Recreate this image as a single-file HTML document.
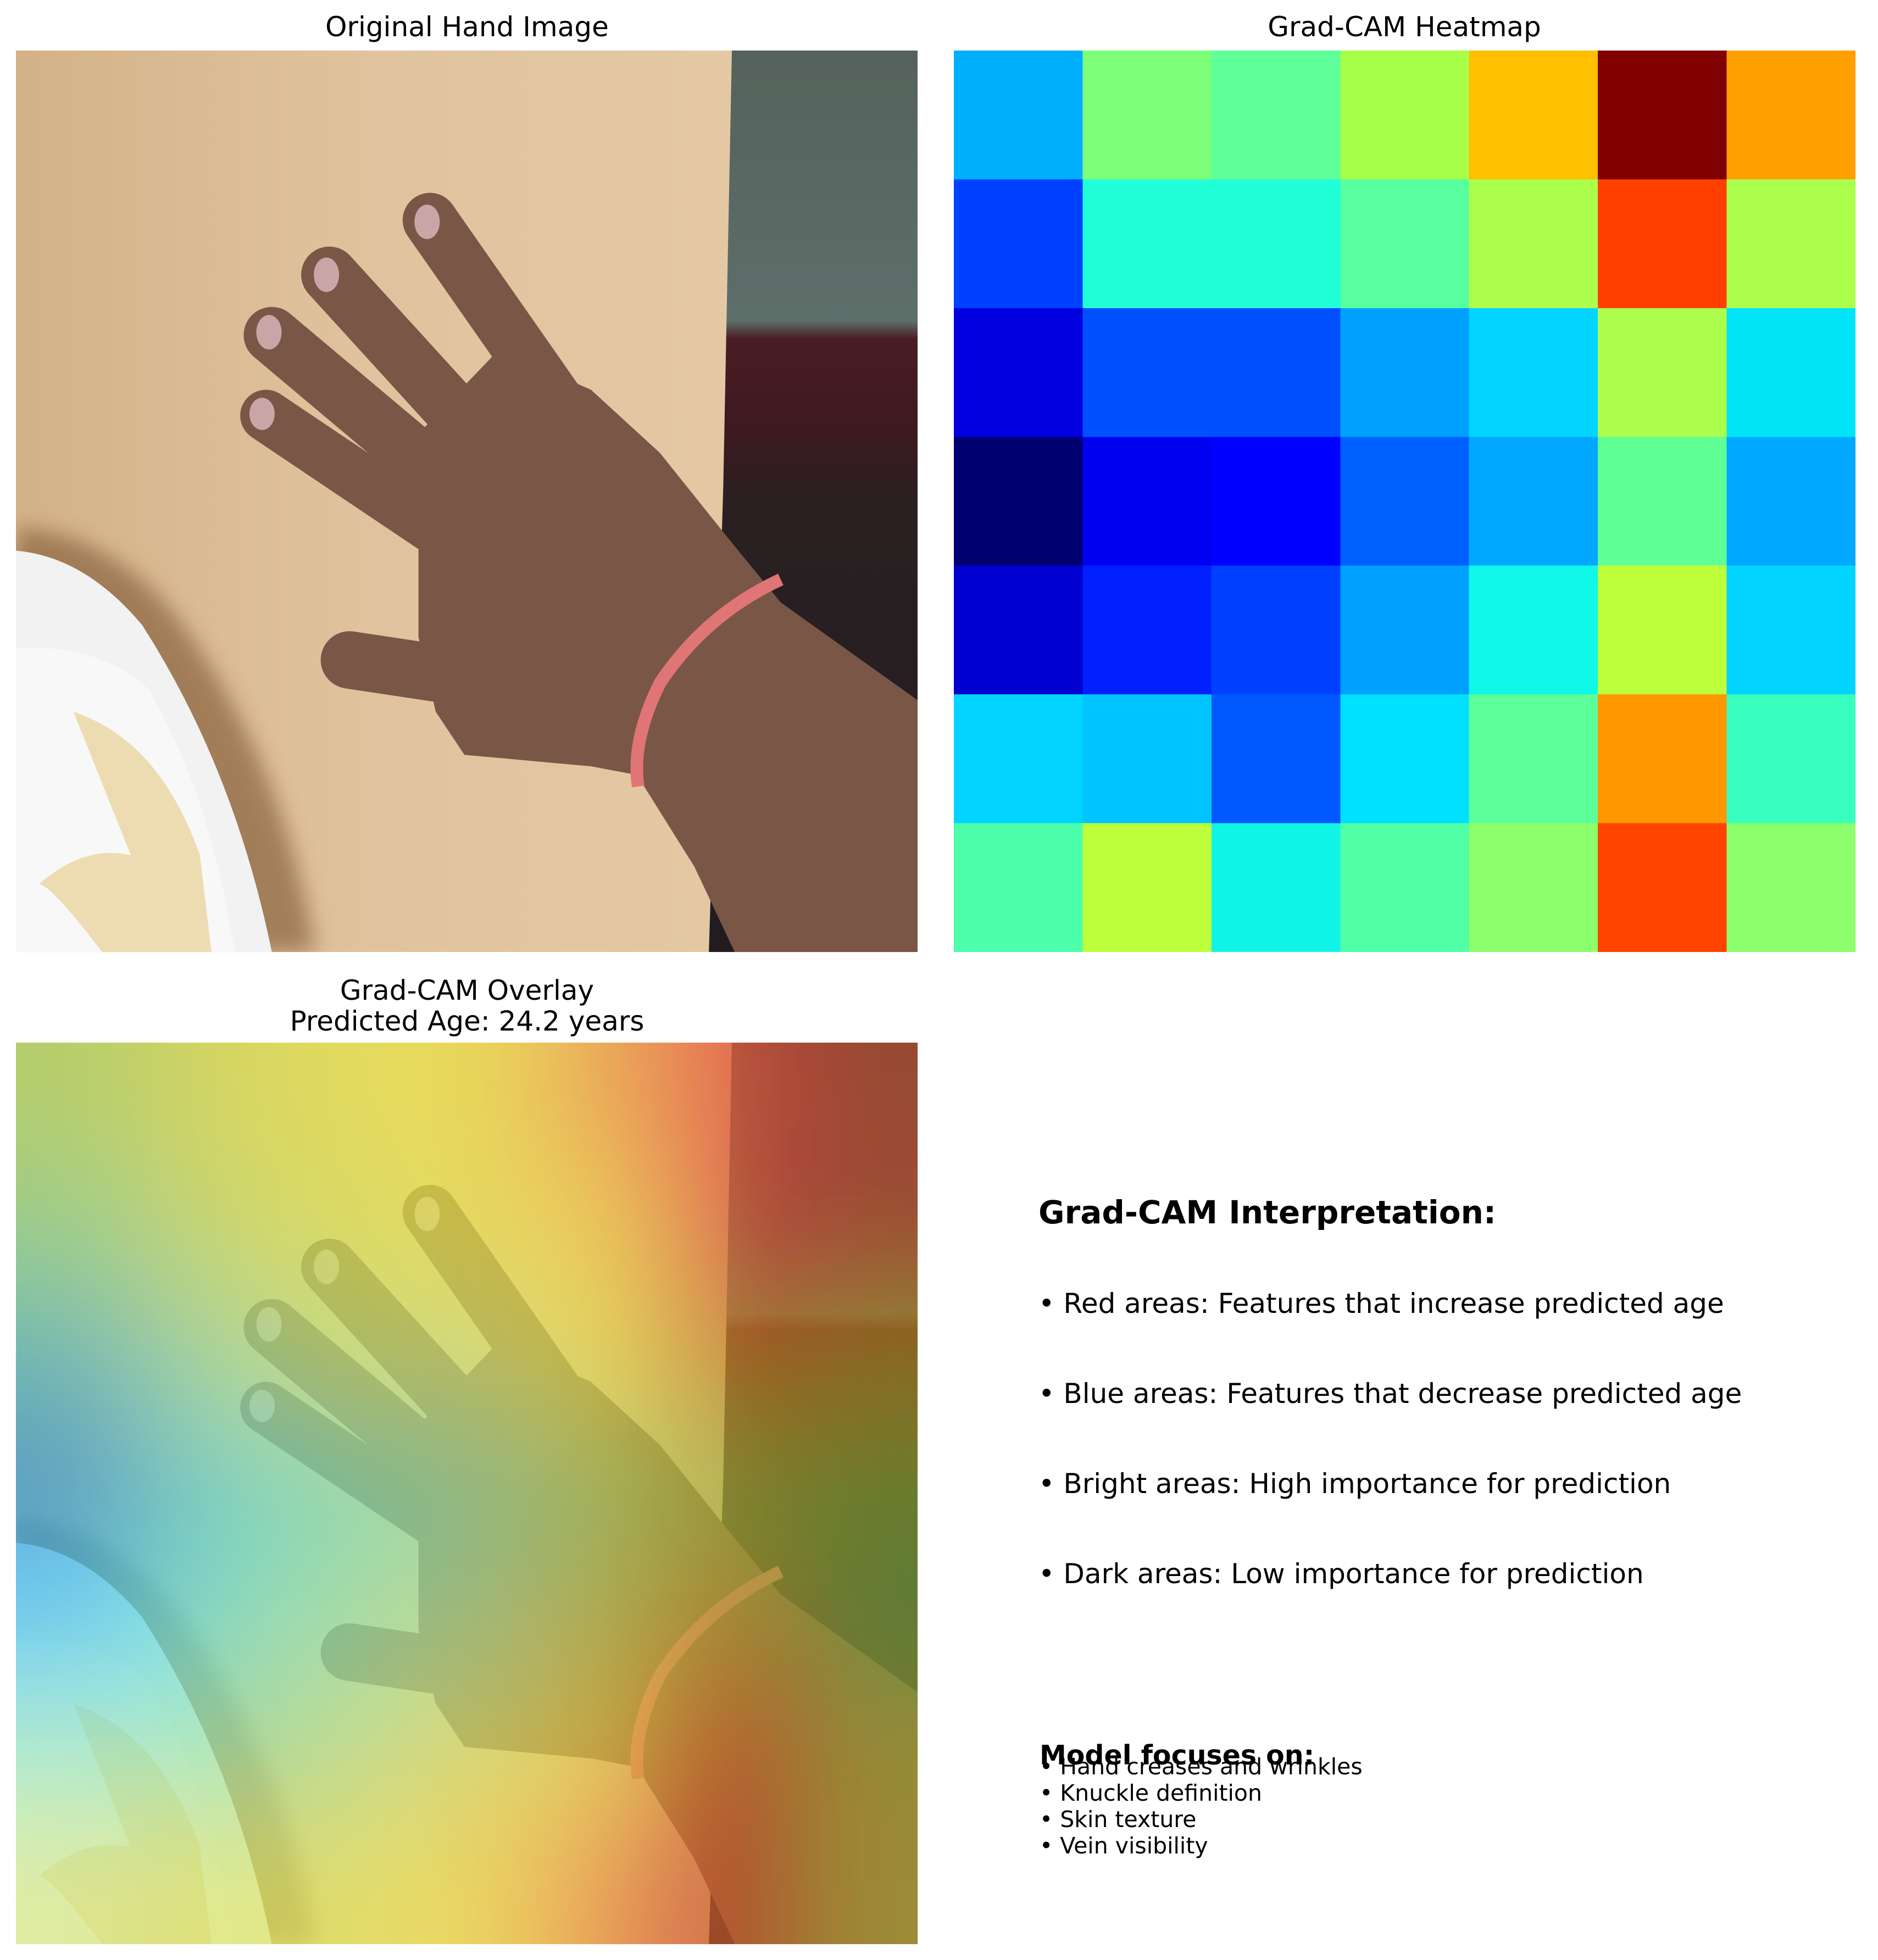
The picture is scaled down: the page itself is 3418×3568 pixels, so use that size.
<!DOCTYPE html>
<html><head><meta charset="utf-8"><style>
html,body{margin:0;padding:0;background:#fff;width:3418px;height:3568px;overflow:hidden;}
svg{display:block;}
text{font-family:"DejaVu Sans","Liberation Sans",sans-serif;fill:#000;}
</style></head><body>
<svg width="3418" height="3568" viewBox="0 0 3418 3568" xmlns="http://www.w3.org/2000/svg" style="overflow:hidden">
<defs>
  <linearGradient id="wood" x1="0" y1="0" x2="1" y2="0">
    <stop offset="0" stop-color="#d4b288"/><stop offset="0.4" stop-color="#e0c39e"/><stop offset="1" stop-color="#e6cba8"/>
  </linearGradient>
  <linearGradient id="strip" x1="0" y1="0" x2="0" y2="1">
    <stop offset="0" stop-color="#55625c"/><stop offset="0.3" stop-color="#5e6e6a"/><stop offset="0.32" stop-color="#4a1c24"/>
    <stop offset="0.42" stop-color="#3e1a20"/><stop offset="0.5" stop-color="#2a2022"/><stop offset="1" stop-color="#221c20"/>
  </linearGradient>
  <filter id="bl" filterUnits="userSpaceOnUse" x="-900" y="-900" width="3400" height="3400"><feGaussianBlur stdDeviation="110"/></filter>
  <filter id="sb"><feGaussianBlur stdDeviation="18"/></filter>
  <clipPath id="cp"><rect x="0" y="0" width="1568" height="1568"/></clipPath>
  <g id="photo">
   <g clip-path="url(#cp)">
    <rect x="0" y="0" width="1568" height="1568" fill="url(#wood)"/>
    <path d="M1245 0 L1568 0 L1568 1568 L1205 1568 L1230 760 Z" fill="url(#strip)"/>
    <path d="M0 830 Q170 840 290 1000 Q470 1250 520 1568 L0 1568Z" fill="#8a6440" opacity="0.7" filter="url(#sb)"/>
    <path d="M0 870 Q120 880 220 1000 Q380 1250 445 1568 L0 1568Z" fill="#f2f2f2"/>
    <path d="M0 1040 Q140 1030 230 1110 Q340 1300 380 1568 L0 1568Z" fill="#f8f8f8"/>
    <path d="M100 1150 Q250 1200 320 1400 L340 1568 L150 1568 Q60 1450 40 1450 Q120 1380 200 1400 Z" fill="#ead4a0" opacity="0.8"/>
    <g stroke="#7a5646" stroke-linecap="round" fill="none">
      <line x1="720" y1="295" x2="940" y2="610" stroke-width="95"/>
      <line x1="545" y1="390" x2="800" y2="670" stroke-width="98"/>
      <line x1="445" y1="495" x2="760" y2="760" stroke-width="98"/>
      <line x1="435" y1="635" x2="740" y2="840" stroke-width="90"/>
      <line x1="580" y1="1060" x2="780" y2="1090" stroke-width="100"/>
    </g>
    <path d="M840 520 L1000 590 L1120 700 L1240 850 L1330 960 L1568 1130 L1568 1568 L1250 1568 L1180 1420 L1080 1260 L1000 1245 L780 1225 L730 1150 L700 1020 L700 840 L620 750 Z" fill="#7a5646"/>
    <g fill="#c8a6a8"><ellipse cx="715" cy="298" rx="22" ry="30"/><ellipse cx="540" cy="390" rx="22" ry="30"/><ellipse cx="440" cy="490" rx="22" ry="30"/><ellipse cx="428" cy="632" rx="22" ry="28"/></g>
    <path d="M1330 920 Q1200 980 1120 1100 Q1070 1200 1082 1280" stroke="#e07575" stroke-width="22" fill="none"/>
   </g>
  </g>
</defs>

<text x="850" y="66" font-size="50" text-anchor="middle">Original Hand Image</text>
<text x="2556" y="66" font-size="50" text-anchor="middle">Grad-CAM Heatmap</text>
<text x="850" y="1820" font-size="50" text-anchor="middle">Grad-CAM Overlay</text>
<text x="850" y="1876" font-size="50" text-anchor="middle">Predicted Age: 24.2 years</text>

<g transform="translate(29,92) scale(1.0466)"><use href="#photo"/></g>

<g transform="translate(1736,92) scale(234.43)" shape-rendering="crispEdges">
  <rect x="0" y="0" width="1" height="1" fill="#00b0ff"/><rect x="1" y="0" width="1" height="1" fill="#7dff7a"/><rect x="2" y="0" width="1" height="1" fill="#5fff9a"/><rect x="3" y="0" width="1" height="1" fill="#a8ff48"/><rect x="4" y="0" width="1" height="1" fill="#ffc000"/><rect x="5" y="0" width="1" height="1" fill="#800000"/><rect x="6" y="0" width="1" height="1" fill="#ffa000"/>
  <rect x="0" y="1" width="1" height="1" fill="#0040ff"/><rect x="1" y="1" width="1" height="1" fill="#20ffd8"/><rect x="2" y="1" width="1" height="1" fill="#20ffd8"/><rect x="3" y="1" width="1" height="1" fill="#58ff9e"/><rect x="4" y="1" width="1" height="1" fill="#acff4c"/><rect x="5" y="1" width="1" height="1" fill="#ff4000"/><rect x="6" y="1" width="1" height="1" fill="#acff4c"/>
  <rect x="0" y="2" width="1" height="1" fill="#0000e0"/><rect x="1" y="2" width="1" height="1" fill="#0050ff"/><rect x="2" y="2" width="1" height="1" fill="#0050ff"/><rect x="3" y="2" width="1" height="1" fill="#00a0ff"/><rect x="4" y="2" width="1" height="1" fill="#00d4ff"/><rect x="5" y="2" width="1" height="1" fill="#acff4c"/><rect x="6" y="2" width="1" height="1" fill="#00e4f8"/>
  <rect x="0" y="3" width="1" height="1" fill="#000070"/><rect x="1" y="3" width="1" height="1" fill="#0000f0"/><rect x="2" y="3" width="1" height="1" fill="#0000ff"/><rect x="3" y="3" width="1" height="1" fill="#0060ff"/><rect x="4" y="3" width="1" height="1" fill="#00a8ff"/><rect x="5" y="3" width="1" height="1" fill="#60ff96"/><rect x="6" y="3" width="1" height="1" fill="#00a8ff"/>
  <rect x="0" y="4" width="1" height="1" fill="#0000d0"/><rect x="1" y="4" width="1" height="1" fill="#0020ff"/><rect x="2" y="4" width="1" height="1" fill="#0040ff"/><rect x="3" y="4" width="1" height="1" fill="#00a0ff"/><rect x="4" y="4" width="1" height="1" fill="#10f8e8"/><rect x="5" y="4" width="1" height="1" fill="#bcff3a"/><rect x="6" y="4" width="1" height="1" fill="#00d4ff"/>
  <rect x="0" y="5" width="1" height="1" fill="#00d4ff"/><rect x="1" y="5" width="1" height="1" fill="#00c4ff"/><rect x="2" y="5" width="1" height="1" fill="#0058ff"/><rect x="3" y="5" width="1" height="1" fill="#00e0ff"/><rect x="4" y="5" width="1" height="1" fill="#5cff9a"/><rect x="5" y="5" width="1" height="1" fill="#ff9800"/><rect x="6" y="5" width="1" height="1" fill="#38ffbe"/>
  <rect x="0" y="6" width="1" height="1" fill="#4cffaa"/><rect x="1" y="6" width="1" height="1" fill="#bcff3a"/><rect x="2" y="6" width="1" height="1" fill="#10f4e8"/><rect x="3" y="6" width="1" height="1" fill="#50ffa6"/><rect x="4" y="6" width="1" height="1" fill="#8cff6c"/><rect x="5" y="6" width="1" height="1" fill="#ff4400"/><rect x="6" y="6" width="1" height="1" fill="#8cff6c"/>
</g>

<g transform="translate(29,1898) scale(1.0466)">
  <g clip-path="url(#cp)">
    <g filter="url(#bl)">
      <g transform="scale(224)">
        <rect x="-4" y="-4" width="5" height="5" fill="#a8d860"/><rect x="1" y="-4" width="1" height="5" fill="#d0e050"/><rect x="2" y="-4" width="1" height="5" fill="#e4e448"/><rect x="3" y="-4" width="1" height="5" fill="#ece440"/><rect x="4" y="-4" width="1" height="5" fill="#f0a040"/><rect x="5" y="-4" width="1" height="5" fill="#e84030"/><rect x="6" y="-4" width="5" height="5" fill="#b04020"/>
        <rect x="-4" y="1" width="5" height="1" fill="#80d890"/><rect x="1" y="1" width="1" height="1" fill="#c0e060"/><rect x="2" y="1" width="1" height="1" fill="#d8e450"/><rect x="3" y="1" width="1" height="1" fill="#e8e448"/><rect x="4" y="1" width="1" height="1" fill="#f0d040"/><rect x="5" y="1" width="1" height="1" fill="#e03030"/><rect x="6" y="1" width="5" height="1" fill="#b84020"/>
        <rect x="-4" y="2" width="5" height="1" fill="#40b8c8"/><rect x="1" y="2" width="1" height="1" fill="#90e0a0"/><rect x="2" y="2" width="1" height="1" fill="#c0e470"/><rect x="3" y="2" width="1" height="1" fill="#c8e070"/><rect x="4" y="2" width="1" height="1" fill="#e8e040"/><rect x="5" y="2" width="1" height="1" fill="#c07020"/><rect x="6" y="2" width="5" height="1" fill="#a09020"/>
        <rect x="-4" y="3" width="5" height="1" fill="#3090d8"/><rect x="1" y="3" width="1" height="1" fill="#50d8d8"/><rect x="2" y="3" width="1" height="1" fill="#70e0b8"/><rect x="3" y="3" width="1" height="1" fill="#90e0a0"/><rect x="4" y="3" width="1" height="1" fill="#b0d860"/><rect x="5" y="3" width="1" height="1" fill="#a0b030"/><rect x="6" y="3" width="5" height="1" fill="#80a030"/>
        <rect x="-4" y="4" width="5" height="1" fill="#30c0f0"/><rect x="1" y="4" width="1" height="1" fill="#60e8d8"/><rect x="2" y="4" width="1" height="1" fill="#90e8a8"/><rect x="3" y="4" width="1" height="1" fill="#b0e090"/><rect x="4" y="4" width="1" height="1" fill="#c8d050"/><rect x="5" y="4" width="1" height="1" fill="#c09020"/><rect x="6" y="4" width="5" height="1" fill="#70a040"/>
        <rect x="-4" y="5" width="5" height="1" fill="#90e8c0"/><rect x="1" y="5" width="1" height="1" fill="#90e0a0"/><rect x="2" y="5" width="1" height="1" fill="#b0e890"/><rect x="3" y="5" width="1" height="1" fill="#d8e060"/><rect x="4" y="5" width="1" height="1" fill="#e8d040"/><rect x="5" y="5" width="1" height="1" fill="#d03020"/><rect x="6" y="5" width="5" height="1" fill="#a0a030"/>
        <rect x="-4" y="6" width="5" height="5" fill="#d8e880"/><rect x="1" y="6" width="1" height="5" fill="#d8e060"/><rect x="2" y="6" width="1" height="5" fill="#e0e858"/><rect x="3" y="6" width="1" height="5" fill="#f0e048"/><rect x="4" y="6" width="1" height="5" fill="#f09040"/><rect x="5" y="6" width="1" height="5" fill="#c82820"/><rect x="6" y="6" width="5" height="5" fill="#a8a030"/>
      </g>
    </g>
    <g opacity="0.28"><use href="#photo"/></g>
  </g>
</g>

<text x="1890" y="2227" font-size="58" font-weight="bold">Grad-CAM Interpretation:</text>
<text x="1890" y="2390" font-size="50">• Red areas: Features that increase predicted age</text>
<text x="1890" y="2554" font-size="50">• Blue areas: Features that decrease predicted age</text>
<text x="1890" y="2718" font-size="50">• Bright areas: High importance for prediction</text>
<text x="1890" y="2882" font-size="50">• Dark areas: Low importance for prediction</text>

<text x="1892" y="3212" font-size="49" font-weight="bold">Model focuses on:</text>
<text x="1892" y="3230" font-size="41">• Hand creases and wrinkles</text>
<text x="1892" y="3278" font-size="41">• Knuckle definition</text>
<text x="1892" y="3326" font-size="41">• Skin texture</text>
<text x="1892" y="3374" font-size="41">• Vein visibility</text>
</svg>
</body></html>
